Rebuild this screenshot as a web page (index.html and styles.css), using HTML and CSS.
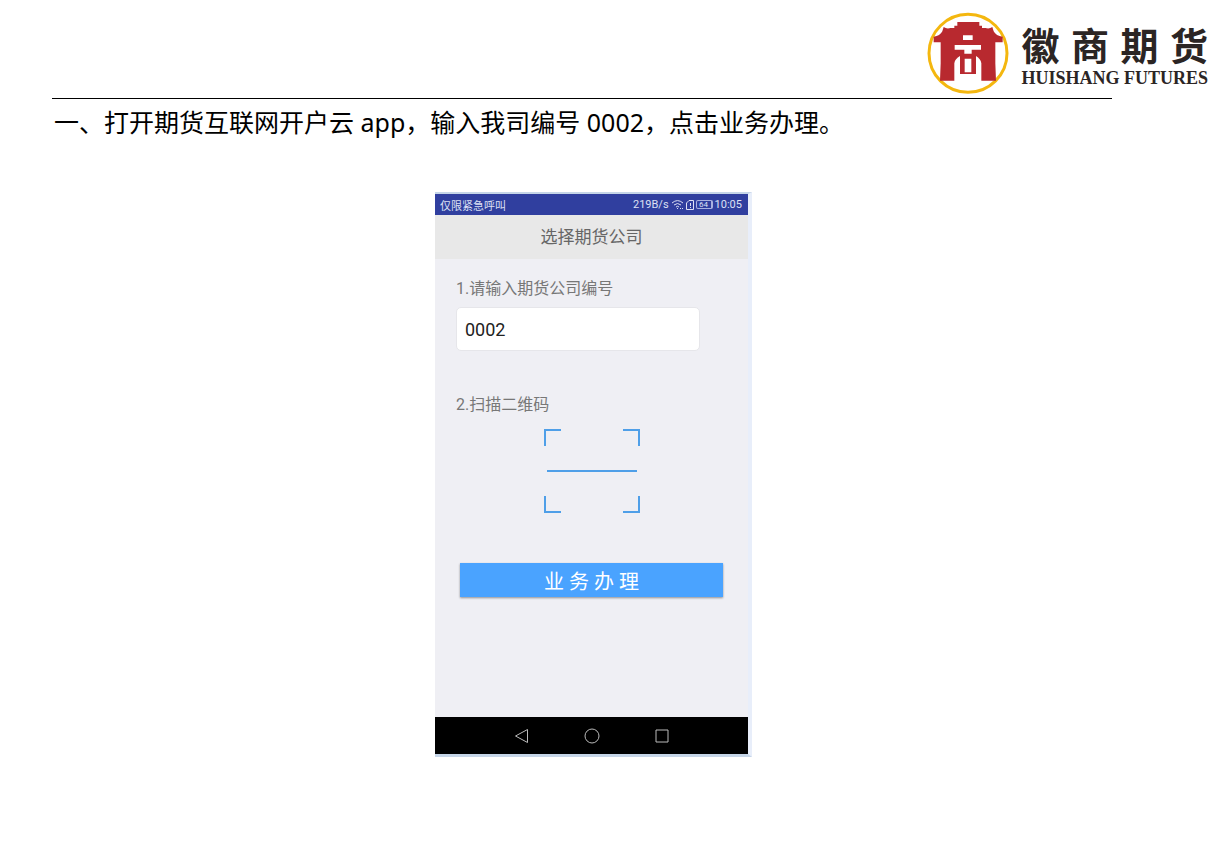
FILE: index.html
```
<!DOCTYPE html>
<html lang="zh-CN">
<head>
    <meta charset="UTF-8">
    <meta name="viewport" content="width=device-width, initial-scale=1.0">
    <title>徽商期货 开户指南</title>
    <link rel="stylesheet" href="styles.css">
</head>
<body>
    <header class="page-header">
        <svg class="emblem" viewBox="7 6 246 246" aria-hidden="true">
            <circle cx="130" cy="130" r="117" fill="#fff" stroke="#f4b70f" stroke-width="9"/>
            <path fill="#b8292f" d="M98 36H164V47H172V54H182Q194 58 203 51L207 64Q214 78 234 80V97H212V160L214 212H170V160Q168 146 154 138V192H106V138Q91 146 89 160V212H46L48 160V97H27V80Q46 78 53 64L57 51Q66 58 78 54H89V47H98Z"/>
            <path fill="#fff" d="M115 76H144V90H115ZM90 105H169V119H141V131H119V119H90ZM120 146H140V187H120Z"/>
        </svg>
        <div class="brand">
            <div class="brand-cn"><span>徽</span><span>商</span><span>期</span><span>货</span></div>
            <div class="brand-en">HUISHANG FUTURES</div>
        </div>
    </header>

    <main class="content">
        <h1 class="step">一、打开期货互联网开户云 app，输入我司编号 0002，点击业务办理。</h1>

        <div class="phone-area">
            <section class="phone">
                <div class="status-bar">
                    <span>仅限紧急呼叫</span>
                    <span class="status-right">
                        <span>219B/s</span>
                        <svg class="icon-wifi" viewBox="0 0 13 11" fill="none" stroke="#dde0f4">
                            <path d="M1 4Q6.5-.8 12 4M3 6Q6.5 3 10 6M5 8Q6.500 6.500 8 8"/>
                            <path d="M6 9.500h1M9 9.500h1M11 9.500h1"/>
                        </svg>
                        <svg class="icon-sim" viewBox="0 0 8 11" fill="none" stroke="#dde0f4">
                            <path d="M3 1.500H7.500V10.500H.5V4ZM4.500 4V7M4.500 8V9"/>
                        </svg>
                        <span class="battery">64</span>
                        <span>10:05</span>
                    </span>
                </div>
                <h2 class="title-bar">选择期货公司</h2>
                <div class="screen">
                    <label class="field-label" for="company">1.请输入期货公司编号</label>
                    <input class="company-input" type="text" id="company" name="company" value="0002">
                    <p class="field-label">2.扫描二维码</p>
                    <svg class="scan" viewBox="0 0 96 86" fill="none" stroke="#4f9fe8" stroke-width="2">
                        <path d="M1 18V2H17M79 2H95V18M1 68V84H17M79 84H95V68"/>
                        <path d="M3 43H93"/>
                    </svg>
                    <button class="submit-btn" type="button">业 务 办 理</button>
                </div>
                <nav class="nav-bar">
                    <button class="nav-btn" type="button" aria-label="返回">
                        <svg viewBox="0 0 16 16"><path d="M1.500 8L13.500 1.500V14.500Z"/></svg>
                    </button>
                    <button class="nav-btn" type="button" aria-label="主页">
                        <svg viewBox="0 0 16 16"><circle cx="8" cy="8" r="7"/></svg>
                    </button>
                    <button class="nav-btn" type="button" aria-label="最近任务">
                        <svg viewBox="0 0 16 16"><path d="M2 2H14V14H2Z"/></svg>
                    </button>
                </nav>
            </section>
        </div>
    </main>
</body>
</html>
```
FILE: styles.css
```
body {
    margin: 0;
    background: #fff;
    color: #000;
    font-family: "Noto Sans", "Noto Sans CJK SC", sans-serif;
}
.page-header {
    display: flex;
    justify-content: flex-end;
    align-items: flex-start;
    gap: 12px;
    padding: 12px 20px 0 0;
    height: 86px;
}
.emblem {
    width: 82px;
    height: 82px;
}
.brand {
    color: #2b2524;
    padding-top: 10px;
}
.brand-cn {
    display: flex;
    justify-content: space-between;
    font: bold 38px/44px "Noto Sans CJK SC", sans-serif;
}
.brand-en {
    font: bold 18px/24px "Liberation Serif", serif;
    white-space: nowrap;
}
.content {
    margin: 0 116px 0 52px;
    border-top: 1px solid #000;
}
.step {
    margin: 0;
    padding-left: 2px;
    font-size: 25px;
    font-weight: 400;
    line-height: 46px;
}
.phone-area {
    display: flex;
    justify-content: center;
    padding: 47px 0 0 23px;
}
.phone {
    width: 313px;
    border: solid #c5d5e8;
    border-width: 2px 4px 3px 0;
    border-right-color: #e8eefa;
    font-family: Roboto, "Noto Sans CJK SC", sans-serif;
}
.status-bar {
    display: flex;
    justify-content: space-between;
    align-items: center;
    height: 21px;
    padding: 0 6px 0 5px;
    background: #303f9f;
    color: #dde0f4;
    font-size: 11px;
}
.status-right {
    display: flex;
    align-items: center;
    gap: 2px;
}
.icon-wifi {
    width: 13px;
    height: 11px;
}
.icon-sim {
    width: 8px;
    height: 11px;
}
.battery {
    width: 14px;
    border: 1px solid #aab2e0;
    border-right-width: 2px;
    border-radius: 2px;
    font-size: 8px;
    line-height: 7px;
    text-align: center;
}
.title-bar {
    margin: 0;
    background: #e8e8e8;
    color: #666;
    font-size: 17px;
    font-weight: 400;
    line-height: 44px;
    text-align: center;
}
.screen {
    display: flex;
    flex-direction: column;
    padding: 18px 21px 120px;
    background: #efeff4;
}
.field-label {
    margin: 0;
    color: #777;
    font-size: 16px;
    line-height: 24px;
}
.company-input {
    box-sizing: border-box;
    width: 244px;
    height: 44px;
    margin: 6px 0 42px;
    padding: 0 8px;
    border: 1px solid #e6e6ea;
    border-radius: 5px;
    background: #fff;
    color: #222;
    font: 18px Roboto, sans-serif;
}
.scan {
    width: 96px;
    height: 86px;
    margin: 11px auto 49px;
}
.submit-btn {
    height: 34px;
    margin: 0 4px;
    padding: 0;
    border: 0;
    background: #4aa3ff;
    box-shadow: 0 1px 2px rgba(0, 0, 0, 0.4);
    color: #fff;
    font: 20px Roboto, "Noto Sans CJK SC", sans-serif;
}
.nav-bar {
    display: flex;
    justify-content: center;
    align-items: center;
    gap: 54px;
    height: 37px;
    background: #000;
}
.nav-btn {
    width: 16px;
    height: 16px;
    padding: 0;
    border: 0;
    background: none;
}
.nav-btn svg {
    display: block;
    fill: none;
    stroke: #bbb;
}
```
